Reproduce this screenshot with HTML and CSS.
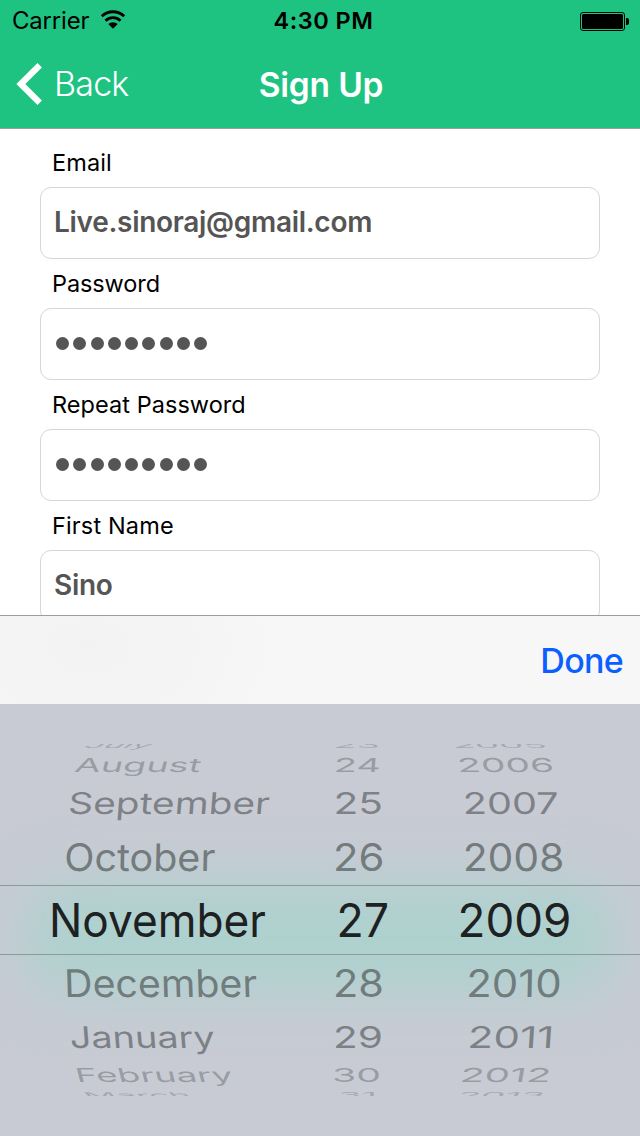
FILE: index.html
```html
<!DOCTYPE html>
<html lang="en">
<head>
<meta charset="utf-8">
<title>Sign Up</title>
<link rel="stylesheet" href="styles.css">
</head>
<body>
<div class="screen">
  <header class="header">
    <div class="status">
      <div class="carrier"><span class="carrier-name">Carrier</span>
        <svg class="wifi" width="26" height="20" viewBox="0 0 26 20"><g fill="none" stroke="#000" stroke-width="2.900"><path d="M1.800 6.300a16.200 16.200 0 0 1 22.400 0"/><path d="M5.500 10.700a10.800 10.800 0 0 1 15 0"/></g><path d="M8.300 14.100a6.700 6.700 0 0 1 9.400 0L13 18.800z"/></svg>
      </div>
      <div class="time">4:30 PM</div>
      <div class="power"><svg width="49" height="19" viewBox="0 0 49 19"><rect x=".5" y=".5" width="44" height="18" rx="2.5" fill="none" stroke="#000"/><rect x="2" y="2" width="41" height="15" rx="1.5"/><path d="M46 6h1.500q1.500 .5 1.500 2v3q0 1.500-1.500 2H46z"/></svg></div>
    </div>
    <nav class="nav">
      <div class="back"><svg width="26" height="42" viewBox="0 0 26 42"><path d="M23.700 2.300L4.800 21l18.900 18.700" fill="none" stroke="#fff" stroke-width="6.300"/></svg><span class="back-label">Back</span></div>
      <h1 class="title">Sign Up</h1>
      <div></div>
    </nav>
  </header>
  <main class="form">
    <label class="label l-email">Email</label>
    <div class="input"><span class="v-email">Live.sinoraj@gmail.com</span></div>
    <label class="label l-pass">Password</label>
    <div class="input dots"><i></i><i></i><i></i><i></i><i></i><i></i><i></i><i></i><i></i></div>
    <label class="label l-repeat">Repeat Password</label>
    <div class="input dots"><i></i><i></i><i></i><i></i><i></i><i></i><i></i><i></i><i></i></div>
    <label class="label l-first">First Name</label>
    <div class="input"><span class="v-first">Sino</span></div>
  </main>
  <div class="toolbar"><span class="done">Done</span></div>
  <section class="picker">
    <div class="glow"></div>
    <svg class="wheel" width="640" height="432" viewBox="0 0 640 432">
      <clipPath id="drum"><rect y="40" width="640" height="352"/></clipPath>
      <path d="M0 181.500h640M0 250.500h640" stroke="#8b9b9c"/>
      <g clip-path="url(#drum)">
        <g class="far4">
          <text transform="matrix(1 0 -.3 .2 82 43.500)" textLength="66" lengthAdjust="spacingAndGlyphs">July</text>
          <text transform="matrix(1 0 0 .2 333 43.500)" textLength="47" lengthAdjust="spacingAndGlyphs">23</text>
          <text transform="matrix(1 0 .1 .2 453 43.500)" textLength="95" lengthAdjust="spacingAndGlyphs">2005</text>
        </g>
        <g class="far3">
          <text transform="matrix(1 0 -.12 .48 73.500 68)" textLength="126" lengthAdjust="spacingAndGlyphs">August</text>
          <text transform="matrix(1 0 -.03 .48 333.500 68)" textLength="47" lengthAdjust="spacingAndGlyphs">24</text>
          <text transform="matrix(1 0 .06 .48 458 68)" textLength="97" lengthAdjust="spacingAndGlyphs">2006</text>
        </g>
        <g class="far2">
          <text transform="matrix(1 0 -.06 .75 67.500 110)" textLength="201.500" lengthAdjust="spacingAndGlyphs">September</text>
          <text transform="matrix(1 0 0 .75 333.500 110)" textLength="49.500" lengthAdjust="spacingAndGlyphs">25</text>
          <text transform="matrix(1 0 .02 .75 463 110)" textLength="96" lengthAdjust="spacingAndGlyphs">2007</text>
        </g>
        <g class="far1">
          <text transform="matrix(1 0 -.02 .95 64 167)" textLength="151" lengthAdjust="spacingAndGlyphs">October</text>
          <text transform="matrix(1 0 0 .95 333 167)" textLength="51.500" lengthAdjust="spacingAndGlyphs">26</text>
          <text transform="matrix(1 0 .01 .95 463 167)" textLength="101.500" lengthAdjust="spacingAndGlyphs">2008</text>
        </g>
        <g class="current">
          <text x="49" y="233.300" textLength="217" lengthAdjust="spacingAndGlyphs">November</text>
          <text x="336.500" y="233.300" textLength="52.500" lengthAdjust="spacingAndGlyphs">27</text>
          <text x="457.500" y="233.300" textLength="114" lengthAdjust="spacingAndGlyphs">2009</text>
        </g>
        <g class="far1">
          <text transform="matrix(1 0 .03 .95 64.500 292.800)" textLength="193" lengthAdjust="spacingAndGlyphs">December</text>
          <text transform="matrix(1 0 0 .95 333 292.800)" textLength="51" lengthAdjust="spacingAndGlyphs">28</text>
          <text transform="matrix(1 0 -.02 .95 466 292.800)" textLength="95.500" lengthAdjust="spacingAndGlyphs">2010</text>
        </g>
        <g class="far2">
          <text transform="matrix(1 0 .06 .75 70.500 344)" textLength="145" lengthAdjust="spacingAndGlyphs">January</text>
          <text transform="matrix(1 0 0 .75 333 344)" textLength="50" lengthAdjust="spacingAndGlyphs">29</text>
          <text transform="matrix(1 0 -.05 .75 467 344)" textLength="86.500" lengthAdjust="spacingAndGlyphs">2011</text>
        </g>
        <g class="far3">
          <text transform="matrix(1 0 .12 .48 77 378)" textLength="157" lengthAdjust="spacingAndGlyphs">February</text>
          <text transform="matrix(1 0 0 .48 332 378)" textLength="49" lengthAdjust="spacingAndGlyphs">30</text>
          <text transform="matrix(1 0 -.08 .48 459 378)" textLength="91" lengthAdjust="spacingAndGlyphs">2012</text>
        </g>
        <g class="far4">
          <text transform="matrix(1 0 .2 .2 87 393.700)" textLength="106" lengthAdjust="spacingAndGlyphs">March</text>
          <text transform="matrix(1 0 0 .2 338 393.700)" textLength="39" lengthAdjust="spacingAndGlyphs">31</text>
          <text transform="matrix(1 0 -.12 .2 456 393.700)" textLength="87" lengthAdjust="spacingAndGlyphs">2013</text>
        </g>
      </g>
    </svg>
  </section>
</div>
</body>
</html>
```
FILE: styles.css
```css
* { box-sizing: border-box; }
body { margin: 0; font-family: Inter, "Liberation Sans", sans-serif; color: #000; background: #fff; }
.screen { width: 640px; height: 1136px; overflow: hidden; display: flex; flex-direction: column; }
.header { height: 129px; background: #1ec382; border-bottom: 1px solid #9b9f9d; flex: none; }
.status { height: 40px; display: grid; grid-template-columns: 1fr auto 1fr; align-items: center; padding: 1px 11px 0 12px; font-size: 24px; line-height: 40px; }
.carrier { display: flex; align-items: center; gap: 11px; }
.carrier-name { letter-spacing: -0.2px; }
.wifi { margin-top: -2px; }
.time { font-weight: 600; font-size: 23.500px; letter-spacing: 0.5px; padding-left: 6px; }
.power { display: flex; justify-content: flex-end; }
.nav { height: 88px; display: grid; grid-template-columns: 1fr auto 1fr; align-items: center; color: #fff; padding: 0 16px 1px; }
.back { display: flex; align-items: center; gap: 12px; font-size: 34px; font-weight: 300; }
.back-label { letter-spacing: -0.8px; }
.title { margin: 0; padding: 2px 0 0 2px; font-size: 33.500px; font-weight: 600; letter-spacing: -0.2px; }
.form { height: 486px; flex: none; overflow: hidden; padding: 10px 40px 0; display: flex; flex-direction: column; }
.label { flex: none; height: 48px; line-height: 48px; padding-left: 12px; font-size: 23.500px; }
.l-email { letter-spacing: 0.1px; }
.l-pass { letter-spacing: -0.1px; }
.l-repeat { letter-spacing: 0.05px; }
.l-first { letter-spacing: 0.15px; }
.input { flex: none; height: 72px; margin-bottom: 1px; border: 1px solid #d6d6d6; border-radius: 11px; padding: 0 13px 2px; display: flex; align-items: center; font-size: 28px; font-weight: 600; color: #555; }
.v-email { letter-spacing: -0.3px; }
.v-first { letter-spacing: -0.3px; }
.dots { gap: 4.300px; padding: 0 0 2px 15px; }
.dots i { width: 13px; height: 13px; border-radius: 50%; background: #555; }
.toolbar { flex: none; height: 89px; border-top: 1px solid #999d9b; background: radial-gradient(ellipse 190px 130px at 90px 30px, #f2f2f2, #f7f7f7); display: flex; align-items: center; justify-content: flex-end; padding-right: 17px; }
.done { font-size: 34px; font-weight: 500; letter-spacing: -0.7px; color: #0a60ff; }
.picker { position: relative; flex: 1; overflow: hidden; background: #c8cbd4; }
.glow { position: absolute; left: 25px; right: 25px; top: 178px; height: 112px; border-radius: 36px; background: #aed1ce; filter: blur(28px); }
.wheel { position: relative; display: block; font-family: Inter, "Liberation Sans", sans-serif; font-size: 40px; }
.current { font-size: 46px; fill: #1e2122; }
.far1 { fill: #4c5250; fill-opacity: .68; }
.far2 { fill: #4c5052; fill-opacity: .6; }
.far3 { fill: #4c5052; fill-opacity: .38; }
.far4 { fill: #4c5052; fill-opacity: .28; }
```
